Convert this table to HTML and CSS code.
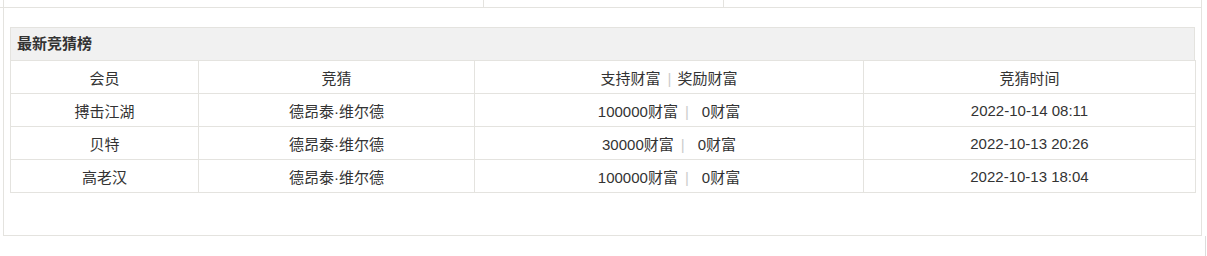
FILE: index.html
```html
<!DOCTYPE html>
<html lang="zh-CN">
<head>
<meta charset="utf-8">
<title>最新竞猜榜</title>
<link rel="stylesheet" href="styles.css">
</head>
<body>
<div class="prev">
  <div class="prev-cell c1"></div>
  <div class="prev-cell c2"></div>
  <div class="prev-cell c3"></div>
</div>
<div class="box">
  <div class="panel-title">最新竞猜榜</div>
  <table class="rank">
    <colgroup>
      <col class="w1"><col class="w2"><col class="w3"><col class="w4">
    </colgroup>
    <thead>
      <tr>
        <th>会员</th>
        <th>竞猜</th>
        <th>支持财富<span class="sep-h">|</span>奖励财富</th>
        <th>竞猜时间</th>
      </tr>
    </thead>
    <tbody>
      <tr>
        <td>搏击江湖</td>
        <td>德昂泰·维尔德</td>
        <td>100000财富<span class="sep">|</span>0财富</td>
        <td>2022-10-14 08:11</td>
      </tr>
      <tr>
        <td>贝特</td>
        <td>德昂泰·维尔德</td>
        <td>30000财富<span class="sep">|</span>0财富</td>
        <td>2022-10-13 20:26</td>
      </tr>
      <tr>
        <td>高老汉</td>
        <td>德昂泰·维尔德</td>
        <td>100000财富<span class="sep">|</span>0财富</td>
        <td>2022-10-13 18:04</td>
      </tr>
    </tbody>
  </table>
</div>
<div class="next"></div>
</body>
</html>
```

FILE: styles.css
```css
html, body {
  margin: 0;
  padding: 0;
  background: #fff;
}
body {
  width: 1207px;
  height: 256px;
  overflow: hidden;
  font-family: "Liberation Sans", "Noto Sans CJK SC", sans-serif;
  font-size: 15px;
  color: #333;
}

.prev {
  display: flex;
  width: 1202px;
  height: 8px;
  padding-left: 3px;
  box-sizing: border-box;
  border-bottom: 1px solid #e4e3df;
}
.prev-cell {
  height: 8px;
  box-sizing: border-box;
}
.prev-cell.c1 {
  width: 481px;
  border-left: 1px solid #e4e3df;
  border-right: 1px solid #e4e3df;
}
.prev-cell.c2 {
  width: 240px;
  border-right: 1px solid #e4e3df;
}
.prev-cell.c3 {
  width: 478px;
  border-right: 1px solid #e4e3df;
}

.box {
  margin-left: 3px;
  width: 1199px;
  box-sizing: border-box;
  border: 1px solid #e4e3df;
  border-top: none;
  padding: 19px 6px 42px 6px;
}

.panel-title {
  height: 32px;
  line-height: 32px;
  border: 1px solid #e4e3df;
  border-bottom: none;
  background: #f1f1f1;
  padding-left: 6px;
  font-weight: bold;
  color: #333;
}

.rank {
  width: 1185px;
  border-collapse: collapse;
  table-layout: fixed;
}
.rank col.w1 { width: 188px; }
.rank col.w2 { width: 276px; }
.rank col.w3 { width: 389px; }
.rank col.w4 { width: 332px; }

.rank th,
.rank td {
  height: 32px;
  padding: 0;
  border: 1px solid #e4e3df;
  text-align: center;
  vertical-align: middle;
  font-weight: normal;
  color: #333;
  white-space: nowrap;
}

.sep-h {
  color: #cccccc;
  margin: 0 6px 0 7px;
}
.sep {
  color: #cccccc;
  margin: 0 13px 0 7px;
}

.next {
  margin-left: 1205px;
  width: 2px;
  height: 21px;
  box-sizing: border-box;
  border-left: 1px solid #dcdcdc;
}
```
